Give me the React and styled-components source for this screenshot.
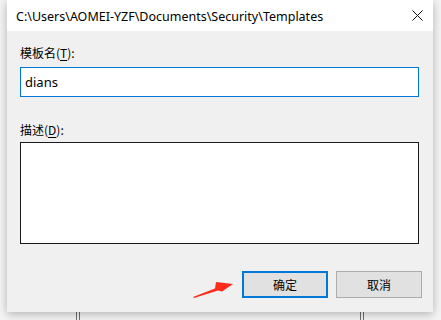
import React from "react";
import styled, { createGlobalStyle } from "styled-components";

const Global = createGlobalStyle`
  html, body { margin: 0; padding: 0; }
  body {
    background: #f4f4f4;
    font-family: "Segoe UI", "Noto Sans", "Noto Sans CJK SC", sans-serif;
    overflow: hidden;
  }
`;

const Page = styled.div`
  width: 441px;
  height: 320px;
  display: flex;
  flex-direction: column;
  position: relative;
  overflow: hidden;
`;

const Window = styled.div`
  margin-left: 7px;
  width: 426px;
  height: 312px;
  background: #f0f0f0;
  box-shadow: 0 2px 9px rgba(0, 0, 0, 0.28);
  display: flex;
  flex-direction: column;
  position: relative;
  flex-shrink: 0;
`;

const TitleBar = styled.div`
  height: 31px;
  background: #ffffff;
  display: flex;
  align-items: center;
  justify-content: space-between;
  padding: 0 10px 0 9px;
  flex-shrink: 0;
`;

const Title = styled.span`
  font-family: "Noto Sans", "Segoe UI", sans-serif;
  font-size: 12.5px;
  color: #000;
  padding-top: 1px;
`;

const CloseIcon = styled.svg`
  width: 11px;
  height: 11px;
  display: block;
`;

const Body = styled.div`
  flex: 1;
  display: flex;
  flex-direction: column;
  padding: 13px 14px 0 13px;
  font-family: "Noto Sans CJK SC", sans-serif;
  font-size: 12px;
  color: #000;
`;

const Label = styled.label`
  display: block;
  height: 18px;
  line-height: 18px;
  margin-bottom: ${(p) => p.$gap}px;
  u { text-decoration-thickness: 1px; text-underline-offset: 2px; }
`;

const TextInput = styled.div`
  height: 30px;
  box-sizing: border-box;
  border: 1px solid #0078d7;
  background: #fff;
  display: flex;
  align-items: center;
  padding-left: 4px;
  font-family: "Noto Sans", "Segoe UI", sans-serif;
  font-size: 13px;
  margin-bottom: 24px;
`;

const TextArea = styled.div`
  height: 102px;
  box-sizing: border-box;
  border: 1px solid #1a1a1a;
  background: #fff;
`;

const ButtonRow = styled.div`
  display: flex;
  justify-content: flex-end;
  gap: 8px;
  margin-top: 27px;
  margin-right: -3px;
`;

const Button = styled.div`
  width: 86px;
  height: 27px;
  box-sizing: border-box;
  background: #e1e1e1;
  border: ${(p) => (p.$primary ? "2px solid #0078d7" : "1px solid #adadad")};
  display: flex;
  align-items: center;
  justify-content: center;
  font-family: "Noto Sans CJK SC", sans-serif;
  font-size: 12px;
  color: #000;
`;

const Arrow = styled.svg`
  position: absolute;
  left: 185px;
  top: 278px;
  width: 50px;
  height: 22px;
`;

const BelowStrip = styled.div`
  flex: 1;
  display: flex;
  align-items: stretch;
`;

const Mark = styled.div`
  width: 1px;
  background: #6f6f6f;
  margin-left: ${(p) => p.$left}px;
`;

export default function App() {
  return (
    <Page>
      <Global />
      <Window>
        <TitleBar>
          <Title>C:\Users\AOMEI-YZF\Documents\Security\Templates</Title>
          <CloseIcon viewBox="0 0 11 11">
            <path d="M0.5 0.5 L10.5 10.5 M10.5 0.5 L0.5 10.5" stroke="#111" strokeWidth="1" fill="none" />
          </CloseIcon>
        </TitleBar>
        <Body>
          <Label $gap={5}>
            模板名(<u>T</u>):
          </Label>
          <TextInput>dians</TextInput>
          <Label $gap={3}>
            描述(<u>D</u>):
          </Label>
          <TextArea />
          <ButtonRow>
            <Button $primary>确定</Button>
            <Button>取消</Button>
          </ButtonRow>
        </Body>
      </Window>
      <BelowStrip>
        <Mark $left={76} />
        <Mark $left={2} />
        <Mark $left={280} />
        <Mark $left={2} />
      </BelowStrip>
      <Arrow viewBox="0 0 50 22">
        <polygon
          points="8,19 30,10.5 31,4 48,6 37,13.5 33,12.5 9,20"
          fill="#ff2a1a"
        />
      </Arrow>
    </Page>
  );
}
